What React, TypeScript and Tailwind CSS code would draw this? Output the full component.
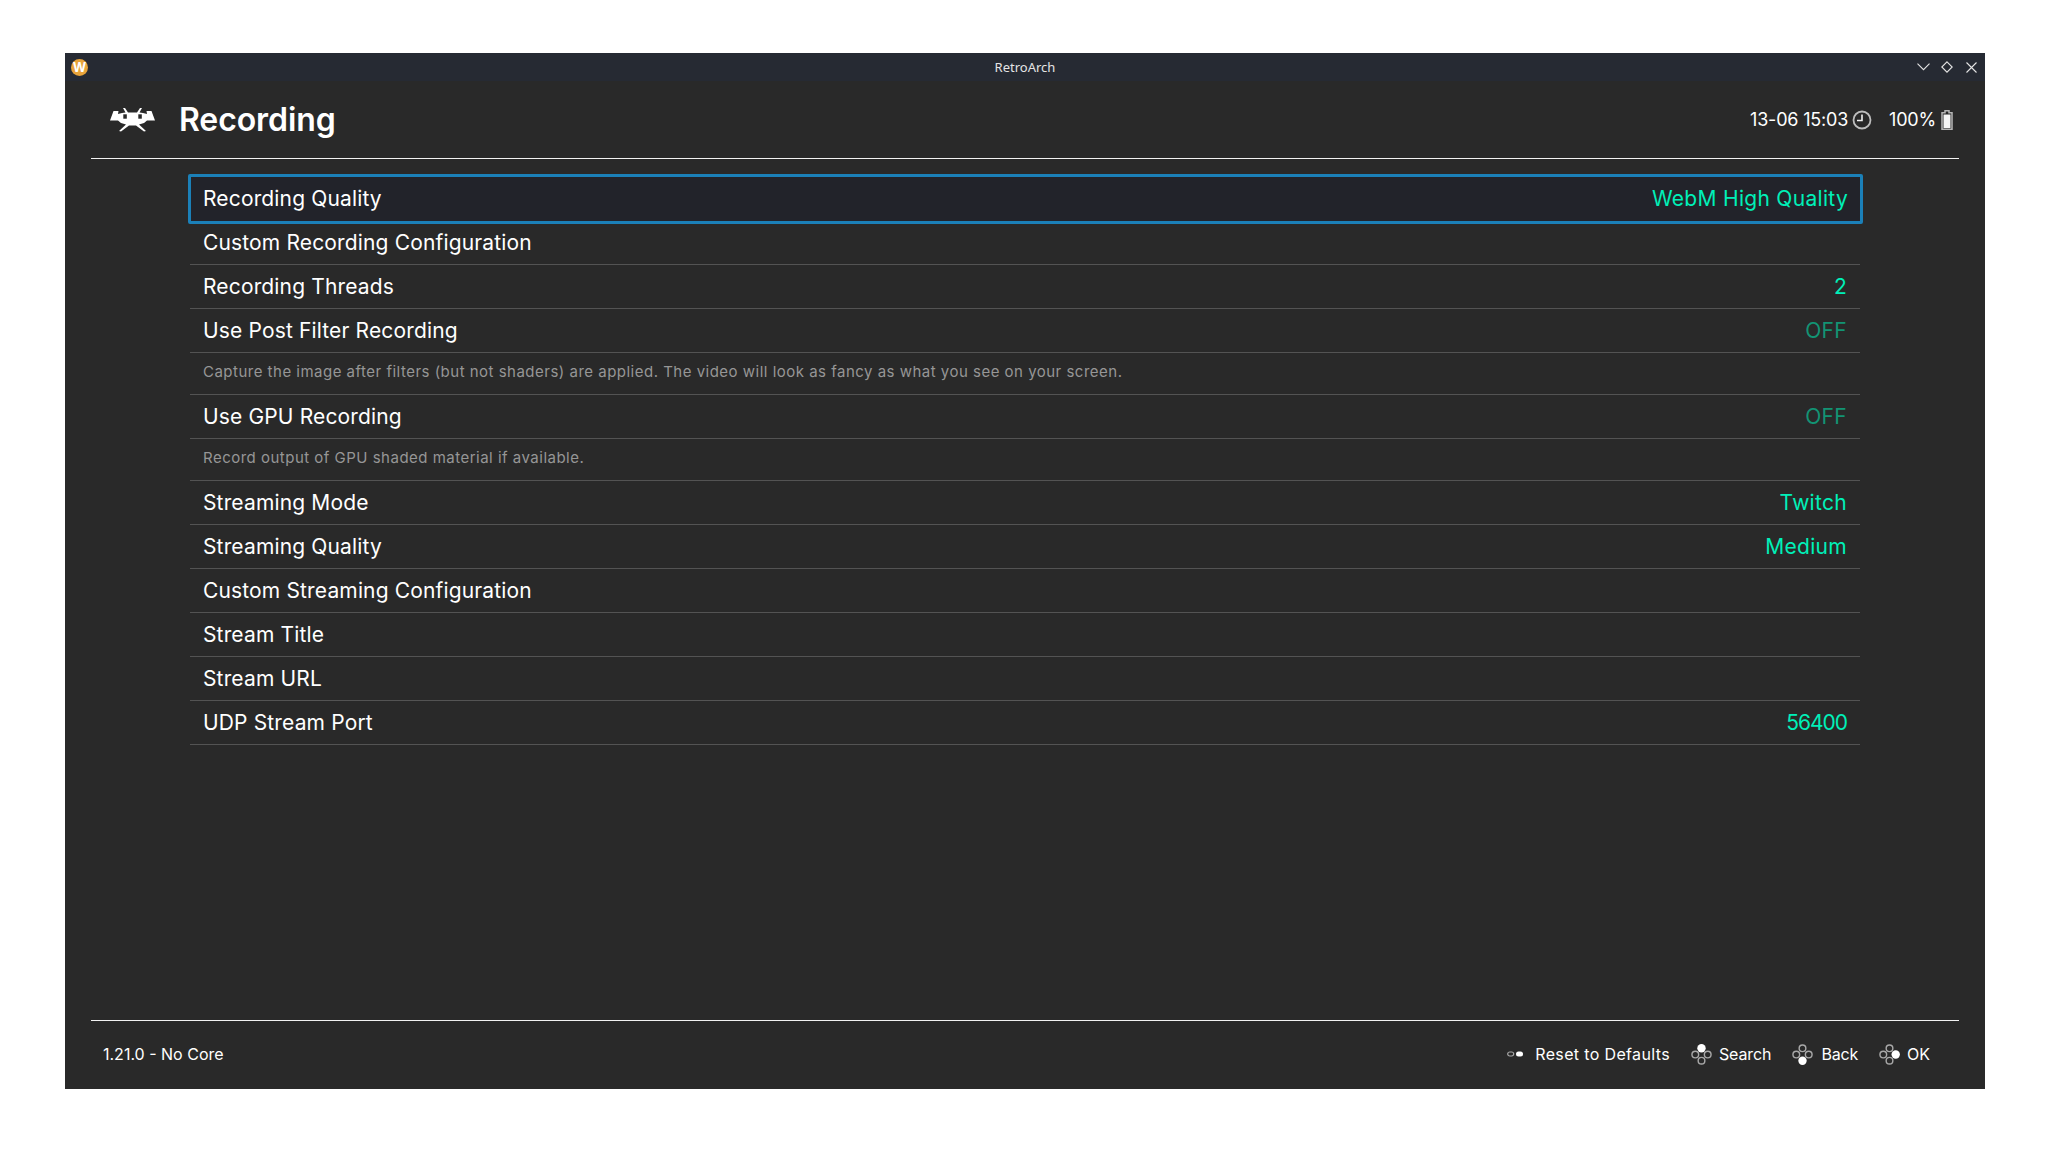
const rows = [
  { label: "Recording Quality", value: "WebM High Quality", selected: true },
  { label: "Custom Recording Configuration" },
  { label: "Recording Threads", value: "2" },
  { label: "Use Post Filter Recording", value: "OFF", off: true },
  { desc: "Capture the image after filters (but not shaders) are applied. The video will look as fancy as what you see on your screen." },
  { label: "Use GPU Recording", value: "OFF", off: true },
  { desc: "Record output of GPU shaded material if available." },
  { label: "Streaming Mode", value: "Twitch" },
  { label: "Streaming Quality", value: "Medium" },
  { label: "Custom Streaming Configuration" },
  { label: "Stream Title" },
  { label: "Stream URL" },
  { label: "UDP Stream Port", value: "56400", tight: true },
];

const PadIcon = ({ active }: { active: "up" | "down" | "right" }) => {
  const dots = [
    { key: "up", cx: 11, cy: 4.5 },
    { key: "left", cx: 4.5, cy: 11 },
    { key: "right", cx: 17.5, cy: 11 },
    { key: "down", cx: 11, cy: 17.5 },
  ];
  return (
    <svg width="21" height="21" viewBox="0 0 22 22">
      {dots.map((d) =>
        d.key === active ? (
          <circle key={d.key} cx={d.cx} cy={d.cy} r="4.4" fill="#fff" />
        ) : (
          <circle key={d.key} cx={d.cx} cy={d.cy} r="3.5" fill="none" stroke="#a8a8a8" strokeWidth="1.5" />
        )
      )}
    </svg>
  );
};

const Logo = () => (
  <svg width="45" height="25" viewBox="0 0 45 25">
    <path
      fill="#fff"
      d="M22.5 5.5L27 5.5L30 1L32 1L29.5 5.5L33 6L37 7L36.5 4L41.5 4L45 13.5L37 13.5L34 16L29 17.5L36 24L34 24.5L26 18.5L19 18.5L11 24.5L9 24L16 17.5L11 16L8 13.500L0 13.500L3.500 4L8.500 4L8 7L12 6L15.500 5.500L13 1L15 1L18 5.500Z"
    />
    <rect x="13.300" y="7.300" width="3.500" height="4.400" fill="#292929" />
    <rect x="28.300" y="7.300" width="3.500" height="4.400" fill="#292929" />
  </svg>
);

export default function App() {
  return (
    <div className="h-[1166px] w-[2050px] overflow-hidden bg-white pl-[65px] pt-[53px] font-['Inter',sans-serif] text-white">
      <div className="flex h-[1036px] w-[1920px] flex-col bg-[#292929]">
        {/* title bar */}
        <div className="relative flex h-[28px] shrink-0 items-center justify-between bg-[#262a33] pl-[6px] pr-[2px]">
          <div className="flex h-[17px] w-[17px] items-center justify-center rounded-full bg-[#e8a33a] text-[13px] font-bold leading-none">W</div>
          <span className="absolute left-0 right-0 pt-[1px] text-center font-['Noto_Sans',sans-serif] text-[13px] text-[#e4e4e4]">RetroArch</span>
          <div className="flex items-center text-[#e4e4e4]">
            <div className="flex w-[24px] justify-center">
              <svg width="13" height="8" viewBox="0 0 13 8">
                <path d="M.5.700L6.500 6.700 12.500.700" fill="none" stroke="currentColor" strokeWidth="1.100" />
              </svg>
            </div>
            <div className="flex w-[24px] justify-center">
              <svg width="12" height="12" viewBox="0 0 12 12">
                <path d="M6 .800L11.200 6 6 11.200.800 6z" fill="none" stroke="currentColor" strokeWidth="1.100" />
              </svg>
            </div>
            <div className="flex w-[24px] justify-center">
              <svg width="11" height="11" viewBox="0 0 11 11">
                <path d="M.5.500l10 10M10.500.500l-10 10" fill="none" stroke="currentColor" strokeWidth="1.100" />
              </svg>
            </div>
          </div>
        </div>

        {/* header */}
        <div className="mx-[26px] flex h-[78px] shrink-0 items-center justify-between border-b border-[#f2f2f2] pl-[19px] pr-[6px]">
          <div className="flex items-center gap-[24px]">
            <Logo />
            <h1 className="text-[32px] font-semibold leading-none tracking-[-0.1px]">Recording</h1>
          </div>
          <div className="flex items-center text-[18px] tracking-[-0.2px]">
            <span>13-06 15:03</span>
            <svg className="ml-[4px]" width="20" height="20" viewBox="0 0 20 20">
              <circle cx="10" cy="10" r="8.500" fill="none" stroke="#bdbdbd" strokeWidth="1.800" />
              <path d="M10 4.500v6H5" fill="none" stroke="#f0f0f0" strokeWidth="1.600" />
            </svg>
            <span className="ml-[17px]">100%</span>
            <svg className="ml-[5px]" width="12" height="20" viewBox="0 0 12 20">
              <path d="M4 .800h4v2h3v16.400h-10v-16.400h3z" fill="none" stroke="#b5b5b5" strokeWidth="1.500" />
              <rect x="2.500" y="4.500" width="7" height="13.500" fill="#f5f5f5" />
            </svg>
          </div>
        </div>

        {/* settings list */}
        <div className="ml-[125px] mt-[15px] w-[1670px] flex-1">
          {rows.map((row, i) =>
            row.desc ? (
              <div key={i} className="flex h-[42px] items-center border-b border-[#535353] px-[13px] pb-[2px] text-[15px] tracking-[0.49px] text-[#969696]">
                {row.desc}
              </div>
            ) : row.selected ? (
              <div key={i} className="relative -mx-[2px] mb-[-3px] flex h-[50px] w-[1675px] items-center justify-between rounded-[2px] border-[3px] border-[#1b80b8] bg-[#22232a] px-[12px] pb-[1px] text-[21px] tracking-[0.15px]">
                <span>{row.label}</span>
                <span className="tracking-[0.3px] text-[#00f0b8]">{row.value}</span>
              </div>
            ) : (
              <div key={i} className="flex h-[44px] items-center justify-between border-b border-[#535353] px-[13px] text-[21px] tracking-[0.15px]">
                <span>{row.label}</span>
                {row.value && (
                  <span className={row.off ? "tracking-[0.3px] text-[#129474]" : row.tight ? "tracking-[-1px] text-[#00f0b8]" : "tracking-[0.3px] text-[#00f0b8]"}>
                    {row.value}
                  </span>
                )}
              </div>
            )
          )}
        </div>

        {/* footer */}
        <div className="mx-[26px] flex h-[69px] shrink-0 items-center justify-between border-t border-[#f2f2f2] pb-[2px] pl-[12px] pr-[29px] text-[16px]">
          <span>1.21.0 - No Core</span>
          <div className="flex items-center">
            <svg width="16" height="6" viewBox="0 0 16 6">
              <rect x="0.700" y="1" width="6" height="4" rx="2" fill="none" stroke="#a8a8a8" strokeWidth="1.200" />
              <rect x="9" y="0.500" width="7" height="5" rx="2.500" fill="#fff" />
            </svg>
            <span className="ml-[12px] tracking-[0.35px]">Reset to Defaults</span>
            <span className="ml-[21px]"><PadIcon active="up" /></span>
            <span className="ml-[7px] tracking-[-0.1px]">Search</span>
            <span className="ml-[21px]"><PadIcon active="down" /></span>
            <span className="ml-[8px] tracking-[-0.2px]">Back</span>
            <span className="ml-[21px]"><PadIcon active="right" /></span>
            <span className="ml-[7px]">OK</span>
          </div>
        </div>
      </div>
    </div>
  );
}
